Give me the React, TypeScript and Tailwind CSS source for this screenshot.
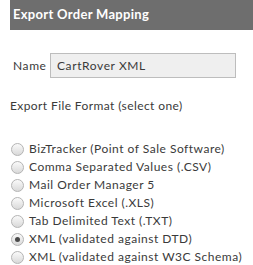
import React, { useState } from 'react';

const formats = [
  'BizTracker (Point of Sale Software)',
  'Comma Separated Values (.CSV)',
  'Mail Order Manager 5',
  'Microsoft Excel (.XLS)',
  'Tab Delimited Text (.TXT)',
  'XML (validated against DTD)',
  'XML (validated against W3C Schema)',
];

export default function App() {
  const [selected, setSelected] = useState(5);

  return (
    <div className="w-[253px] h-[265px] bg-white pl-[10px] overflow-hidden font-['Lato',sans-serif] text-[#3a3a3a]">
      <div className="h-[30px] bg-[#6e6e6e] flex items-center pl-[3px]">
        <span className="text-white font-bold text-[13px] tracking-[0.3px]">Export Order Mapping</span>
      </div>

      <div className="mt-[23px] flex items-center">
        <label className="pl-[3px] text-[12px] tracking-[0.6px] w-[40px]">Name</label>
        <input
          readOnly
          value="CartRover XML"
          className="w-[186px] h-[25px] bg-[#efefef] border border-[#bdbdbd] px-[6px] text-[12px] tracking-[0.6px] text-[#3a3a3a] outline-none"
        />
      </div>

      <p className="mt-[19px] text-[12px] tracking-[0.4px]">Export File Format (select one)</p>

      <div className="mt-[25px] flex flex-col">
        {formats.map((f, i) => (
          <label
            key={f}
            onClick={() => setSelected(i)}
            className="h-[18px] flex items-center gap-[5px] text-[12px] tracking-[0.5px] cursor-pointer"
          >
            <span className="ml-[1px] w-[13px] h-[13px] rounded-full border border-[#b4b4b4] bg-gradient-to-b from-[#fafafa] to-[#d9d9d9] flex items-center justify-center">
              {selected === i && <span className="w-[5px] h-[5px] rounded-full bg-[#4a4a4a]" />}
            </span>
            <span>{f}</span>
          </label>
        ))}
      </div>
    </div>
  );
}
